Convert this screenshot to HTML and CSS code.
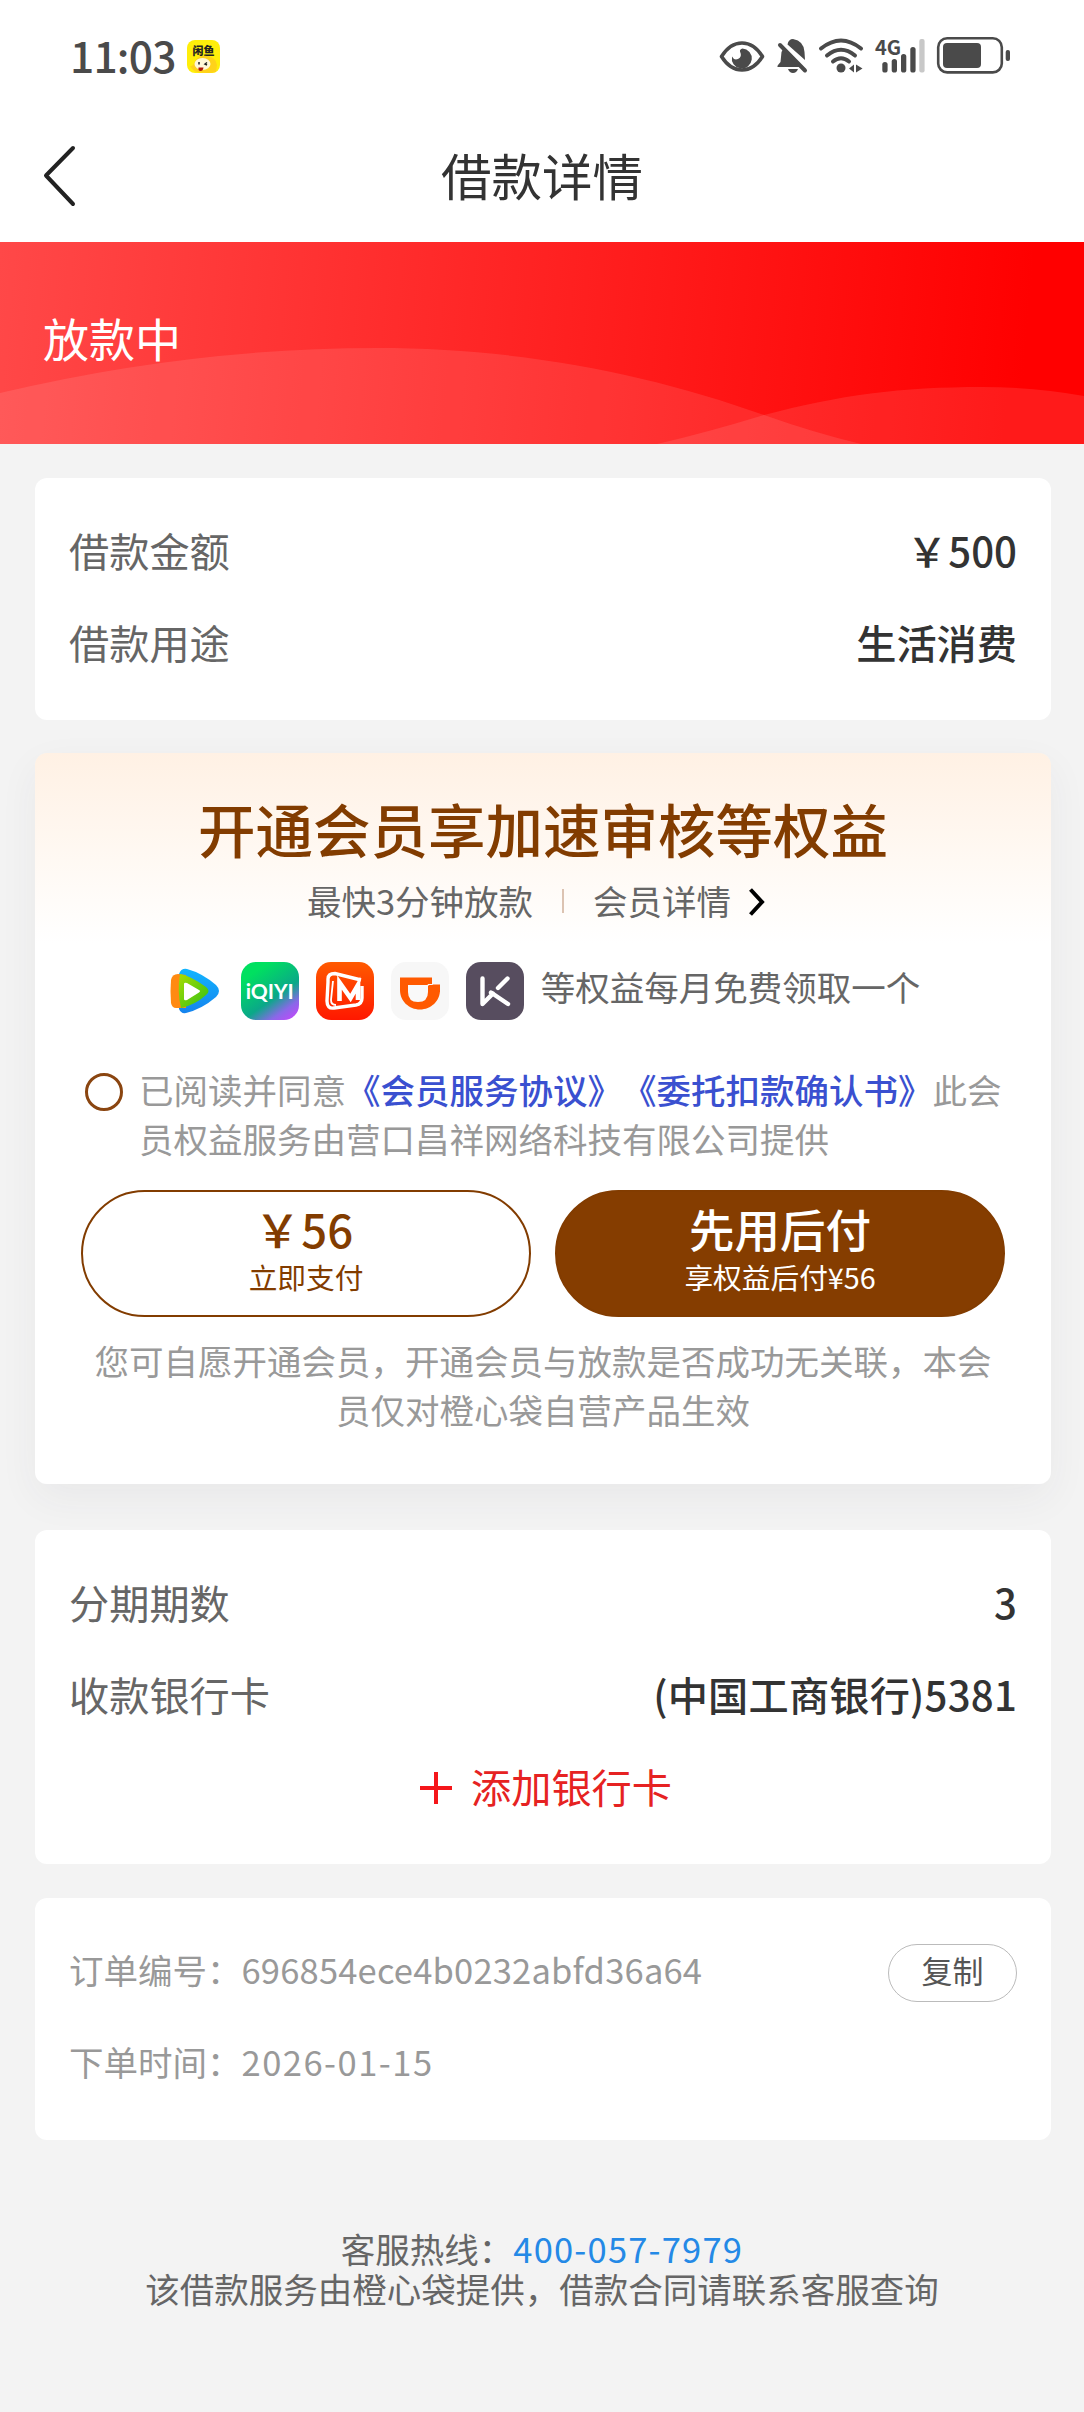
FILE: index.html
```html
<!DOCTYPE html>
<html lang="zh-CN">
<head>
<meta charset="utf-8">
<title>借款详情</title>
<link rel="stylesheet" href="styles.css">
</head>
<body>
<header class="status">
  <div class="status-left">
    <span class="clock">11:03</span>
    <span class="app-badge">
      <span class="app-badge-name">闲鱼</span>
      <svg class="app-badge-face" width="33" height="33" viewBox="0 0 33 33">
        <path d="M3 26Q6 27 8 21Q12 15 20 16Q29 17 30 25L29 32Q22 34 10 32Q6 31 3 26Z" fill="#ffd21a"/>
        <ellipse cx="15.500" cy="24" rx="8" ry="6" fill="#fff7d8"/>
        <path d="M12 22v2.500M20 22.500l-2 1.500 2 1" stroke="#222" stroke-width="1.500" fill="none"/>
        <path d="M11.500 27.500h5q-.5 3.500-3 3.500t-2-3.500Z" fill="#b01808"/>
      </svg>
    </span>
  </div>
  <svg class="status-icons" width="300" height="56" viewBox="715 28 300 56">
    <g fill="none" stroke="#4a4a4a">
      <path d="M721.500 56.500Q730 43 742 43T762.500 56.500Q754 70 742 70T721.500 56.500Z" stroke-width="3.600" stroke-linejoin="round"/>
      <path d="M821 48.500Q841 32.500 861 48.500M827 55.500Q841 44 855 55.500M833 61.500Q841 55 849 61.500" stroke-width="4" stroke-linecap="round"/>
      <rect x="938.200" y="38.200" width="63.600" height="34.200" rx="9" stroke-width="2.600"/>
    </g>
    <g fill="#4a4a4a">
      <path d="M742.500 48.500a10 10 0 1 1-10.500 8q2 4 6 2.500 4.500-2 2-7.500-.5-2 2.500-3Z"/>
      <path d="M781.500 52Q783 49 784 48L801 67H778.500Q776.500 67 778 65L780.500 62ZM787.500 44.500Q788.500 39 793 39 804 41 804.500 52L805 60ZM788 69h10q-1.500 4-5 4t-5-4Z"/>
      <circle cx="841" cy="68" r="4.500"/>
      <path d="M849 68.500l5-4v8ZM856 72.500v-8l6.500 4Z"/>
      <rect x="882.300" y="62" width="5.300" height="10.500" rx="2.600"/>
      <rect x="891.700" y="59" width="5.300" height="13.500" rx="2.600"/>
      <rect x="901" y="54" width="5.300" height="18.500" rx="2.600"/>
      <rect x="910.300" y="47" width="5.300" height="25.500" rx="2.600"/>
      <rect x="919.300" y="39" width="5.300" height="33.500" rx="2" fill="#c8c8c8"/>
      <rect x="943" y="43" width="38" height="25" rx="4"/>
      <rect x="1005.700" y="50" width="4.300" height="11" rx="2"/>
      <text class="net" x="875" y="55">4G</text>
    </g>
    <path d="M780 45L805 70.500" stroke="#4a4a4a" stroke-width="4" stroke-linecap="round"/>
  </svg>
</header>
<nav class="nav">
  <svg class="back" width="36" height="64" viewBox="0 0 36 64"><path d="M30 4L3 31.500L30 60" fill="none" stroke="#222" stroke-width="4" stroke-linecap="round" stroke-linejoin="round"/></svg>
  <h1 class="nav-title">借款详情</h1>
</nav>
<section class="banner">
  <svg class="waves" width="1084" height="202" viewBox="0 0 1084 202">
    <path d="M0 151Q190 106 377 106C520 106 650 132 764 173Q815 191 861 202H0Z" fill="#fff" fill-opacity=".1"/>
    <path d="M657 202Q705 191 764 173C840 153 900 145 982 145Q1035 145 1084 154V202Z" fill="#fff" fill-opacity=".1"/>
  </svg>
  <span class="banner-text">放款中</span>
</section>
<main class="cards">
  <section class="card">
    <div class="row"><span class="label">借款金额</span><span class="value"><span class="yen">￥</span>500</span></div>
    <div class="row"><span class="label">借款用途</span><span class="value">生活消费</span></div>
  </section>

  <section class="card vip">
    <h2 class="vip-title">开通会员享加速审核等权益</h2>
    <div class="vip-sub">
      <span>最快3分钟放款</span>
      <i class="divider"></i>
      <span>会员详情</span>
      <svg class="chevron" width="18" height="30" viewBox="0 0 18 30"><path d="M2.500 2.500L14 15L2.500 27.500" fill="none" stroke="#000" stroke-width="4"/></svg>
    </div>
    <div class="perks">
      <svg width="58" height="58" viewBox="0 0 58 58">
        <defs>
          <linearGradient id="tb" x1="0" y1="0" x2="0" y2="1"><stop offset="0" stop-color="#12b5ff"/><stop offset="1" stop-color="#1583ee"/></linearGradient>
          <linearGradient id="tg" x1="0" y1="0" x2="1" y2="1"><stop offset="0" stop-color="#a8dc00"/><stop offset="1" stop-color="#30c018"/></linearGradient>
        </defs>
        <path d="M13 12Q15 6 21 7Q36 11 50 23Q56 29 50 35Q36 47 20 51Q15 52 13 47Z" fill="url(#tb)"/>
        <path d="M5 18Q6 12 12 12L20 13V46H10Q6 46 5 41Q4 29 5 18Z" fill="#ff8a12"/>
        <path d="M14 12Q25 14 40 25Q45 29 40 33Q29 43 15 46Q11 29 14 12Z" fill="url(#tg)"/>
        <path d="M18 22Q18 20 21 21L33 28Q35 29 33 30.500L21 38Q18 39 18 37Z" fill="#fff"/>
      </svg>
      <span class="iqiyi">iQIYI</span>
      <svg width="58" height="58" viewBox="0 0 58 58">
        <defs><linearGradient id="mg" x1="0" y1="0" x2="0" y2="1"><stop offset="0" stop-color="#ff5a00"/><stop offset="1" stop-color="#ff1800"/></linearGradient></defs>
        <rect width="58" height="58" rx="15" fill="url(#mg)"/>
        <path d="M45 18L19 11.500Q12 11.500 12 17V20L11 39Q11 47 18 46L40 43Q46 42 46 36V24" fill="none" stroke="#fff" stroke-width="3.400"/>
        <path d="M17 19L15 38Q15 43 20 43" fill="none" stroke="#fff" stroke-width="1.800"/>
        <path d="M23.500 39V20.500L34.500 36L42 23V38" fill="none" stroke="#fff" stroke-width="4.600"/>
      </svg>
      <svg width="58" height="58" viewBox="0 0 58 58">
        <rect width="58" height="58" rx="15" fill="#f7f7f7"/>
        <path d="M9 15.500H41V22.500H49V28C49 39 40 47.500 29 47.500S9 39 9 28Z" fill="#ff5a00"/>
        <path d="M17 23H41V30H37Q37 40 27 40Q17 40 17 30Z" fill="#f9f9f9"/>
        <path d="M37 23H49V30H37Z" fill="#ff5a00"/>
        <path d="M41.500 15.500V22.500H37V24" stroke="#f7f7f7" stroke-width="1" fill="none"/>
      </svg>
      <svg width="58" height="58" viewBox="0 0 58 58">
        <rect width="58" height="58" rx="15" fill="#574d5f"/>
        <path d="M16.500 16.500V42L27 31.500M25 30.500L42 42M41.500 16.500L32 26" fill="none" stroke="#fff" stroke-width="4.400" stroke-linecap="round" stroke-linejoin="round"/>
      </svg>
      <span class="perks-text">等权益每月免费领取一个</span>
    </div>
    <div class="agree">
      <i class="radio"></i>
      <p class="agree-text">已阅读并同意<a class="doc">《会员服务协议》《委托扣款确认书》</a>此会员权益服务由营口昌祥网络科技有限公司提供</p>
    </div>
    <div class="pay">
      <button class="btn btn-line"><b class="btn-main price"><span class="yen">￥</span>56</b><span class="btn-sub">立即支付</span></button>
      <button class="btn btn-fill"><b class="btn-main">先用后付</b><span class="btn-sub">享权益后付¥56</span></button>
    </div>
    <p class="note">您可自愿开通会员，开通会员与放款是否成功无关联，本会员仅对橙心袋自营产品生效</p>
  </section>

  <section class="card bank">
    <div class="row"><span class="label">分期期数</span><span class="value">3</span></div>
    <div class="row"><span class="label">收款银行卡</span><span class="value account">(中国工商银行)5381</span></div>
    <div class="row add">
      <svg class="plus" width="32" height="32" viewBox="0 0 32 32"><path d="M16 0V32M0 16H32" stroke="#f5161a" stroke-width="4"/></svg>
      <span>添加银行卡</span>
    </div>
  </section>

  <section class="card order">
    <div class="row"><span>订单编号：<span class="order-no">696854ece4b0232abfd36a64</span></span><button class="copy">复制</button></div>
    <div class="row"><span>下单时间：<span class="date">2026-01-15</span></span></div>
  </section>
</main>
<footer class="foot">
  <p>客服热线：<a class="tel">400-057-7979</a></p>
  <p>该借款服务由橙心袋提供，借款合同请联系客服查询</p>
</footer>
</body>
</html>
```
FILE: styles.css
```css
* { box-sizing: border-box; margin: 0; padding: 0; }
body {
  width: 1084px;
  min-height: 2412px;
  background: #f3f3f3;
  color: #666;
  font-family: "Noto Sans CJK SC", sans-serif;
  font-size: 34.5px;
  text-spacing-trim: space-all;
}
svg { display: block; flex: none; }
button { font-family: inherit; background: none; border: 0; }

.status {
  height: 112px;
  padding: 0 69px 0 70px;
  display: flex;
  justify-content: space-between;
  align-items: center;
  background: #fff;
}
.status-left { display: flex; align-items: center; gap: 11px; }
.clock { font-size: 42.5px; line-height: 60px; font-weight: 500; color: #4a4a4a; width: 106px; letter-spacing: -.8px; margin-top: -2px; }
.app-badge {
  position: relative;
  width: 33px;
  height: 33px;
  border-radius: 8px;
  background: #ffee0a;
  overflow: hidden;
}
.app-badge-name {
  display: block;
  text-align: center;
  font-size: 11px;
  line-height: 20px;
  font-weight: 900;
  color: #222;
}
.app-badge-face { position: absolute; left: 0; top: 0; }
.status-icons { overflow: visible; }
.net { font-weight: 700; font-size: 20px; }

.nav {
  height: 130px;
  padding-left: 43px;
  display: grid;
  grid-template-columns: 36px 1fr 79px;
  align-items: center;
  background: #fff;
}
.back { margin-top: -3px; }
.nav-title {
  text-align: center;
  font-size: 50.5px;
  line-height: 74px;
  font-weight: 400;
  color: #333;
  margin-top: -7px;
}

.banner {
  position: relative;
  height: 202px;
  padding: 63px 43px 0;
  background: linear-gradient(95deg, #ff4848 0%, #ff0000 94%);
}
.waves { position: absolute; left: 0; top: 0; }
.banner-text { position: relative; display: block; color: #fff; font-size: 46px; line-height: 64px; }

.cards { padding: 34px 33px 0 35px; display: flex; flex-direction: column; }
.card {
  padding: 25.5px 34px 32.5px;
  border-radius: 12px;
  background: #fff;
  margin-bottom: 33px;
}
.row {
  height: 92px;
  display: flex;
  align-items: center;
  justify-content: space-between;
  font-size: 40.2px;
}
.value { color: #333; font-weight: 500; }
.yen { margin-right: 1px; }
.account { letter-spacing: .2px; }

.vip {
  height: 731px;
  padding: 35px 46px 0;
  margin-bottom: 46px;
  background: linear-gradient(#fff1e4 0, #fff 190px);
  box-shadow: 0 14px 40px rgba(60, 60, 80, .055);
}
.vip-title {
  text-align: center;
  font-size: 57.5px;
  line-height: 80px;
  font-weight: 500;
  color: #823c00;
}
.vip-sub { display: flex; justify-content: center; align-items: center; height: 60px; margin-top: 2px; padding-right: 13px; }
.divider { width: 2px; height: 24px; margin: 2px 29px 0 29px; background: #dcc3b2; }
.chevron { margin: 4px 0 0 17px; }
.perks { display: flex; justify-content: center; align-items: center; gap: 17px; margin-top: 32px; height: 58px; }
.perks-text { margin-top: -10px; }
.iqiyi {
  width: 58px;
  height: 58px;
  border-radius: 15px;
  background: linear-gradient(145deg, #00e060 20%, #0aa888 60%, #8a68e8 80%, #d040ff 100%);
  color: #fff;
  font: 700 21px/58px Lato, sans-serif;
  text-align: center;
}
.agree { display: flex; margin-top: 45px; padding-left: 4px; }
.radio { flex: none; width: 38px; height: 38px; margin: 8px 16px 0 0; border: 3px solid #8a4510; border-radius: 50%; }
.agree-text { width: 866px; line-height: 49px; color: #999; }
.doc { color: #3a50d0; font-weight: 500; }
.pay { display: flex; gap: 24px; margin-top: 27px; }
.btn {
  width: 450px;
  height: 127px;
  border-radius: 64px;
  border: 2px solid #823c00;
  color: #823c00;
  display: flex;
  flex-direction: column;
  align-items: center;
  padding-top: 9px;
}
.btn-fill { background: #853d00; color: #fff; }
.btn-main { font-size: 45.5px; line-height: 54px; font-weight: 500; }
.price { padding-right: 4px; }
.btn-sub { font-size: 28.7px; line-height: 44px; }
.note { width: 900px; margin: 19px auto 0; line-height: 49px; text-align: center; color: #999; }

.bank { padding-top: 25px; padding-bottom: 33px; margin-bottom: 34px; }
.add { justify-content: center; gap: 19px; color: #e62222; padding-left: 6px; }
.plus { margin-top: 5px; }
.order { padding-top: 25px; padding-bottom: 33px; }
.order .row { font-size: 34.5px; color: #999; }
.order-no { letter-spacing: .2px; }
.date { letter-spacing: 1.5px; }
.copy {
  width: 129px;
  height: 58px;
  margin-top: 8px;
  border: 1.5px solid #bbb;
  border-radius: 29px;
  color: #555;
  font-size: 31px;
  line-height: 50px;
  padding-bottom: 9px;
}

.foot { margin-top: 55px; text-align: center; line-height: 40px; }
.tel { color: #2489e6; letter-spacing: 1.2px; }
```
